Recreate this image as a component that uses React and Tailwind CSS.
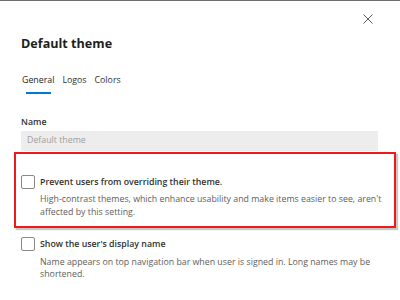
import React from "react";

function Checkbox() {
  return <div className="w-[14px] h-[14px] shrink-0 rounded-[2px] border border-[#8a8886] bg-white" />;
}

export default function App() {
  return (
    <div className="w-[400px] h-[300px] bg-white overflow-hidden border-t border-[#6e6e6e] font-['Open_Sans',sans-serif] text-[#323130] relative">
      <button className="absolute left-[363px] top-[13px] w-[10px] h-[10px] flex items-center justify-center">
        <svg width="10" height="10" viewBox="0 0 10 10">
          <path d="M0.5 0.5 L9.5 9.5 M9.5 0.5 L0.5 9.5" stroke="#5a5a5a" strokeWidth="1" />
        </svg>
      </button>
      <div className="pl-[21px] pt-[35px]">
        <h1 className="text-[12.6px] leading-[16px] font-bold text-[#201f1e]">Default theme</h1>
      </div>
      <div className="pl-[22px] pt-[22px] flex gap-[8px] text-[8.8px] leading-[12px]">
        <div className="flex flex-col items-center">
          <span className="text-[#201f1e]">General</span>
          <div className="mt-[6px] h-[2px] w-[25px] bg-[#0078d4]" />
        </div>
        <span className="text-[#323130]">Logos</span>
        <span className="text-[#323130]">Colors</span>
      </div>
      <div className="pl-[21px] pt-[22px] text-[8.8px] leading-[12px] font-semibold text-[#323130]">Name</div>
      <div className="ml-[21px] mt-[3px] w-[357px] h-[20px] bg-[#ededed] flex items-center pl-[6px] text-[8.8px] text-[#a19f9d]">
        Default theme
      </div>
      <div className="ml-[14px] mt-[1px] w-[382px] h-[76px] border-2 border-[#ee1a1a] shadow-[2px_2px_1px_rgba(0,0,0,0.22)] pl-[5px] pt-[21px]">
        <div className="flex items-center gap-[5px]">
          <Checkbox />
          <span className="text-[8.8px] leading-[14px] font-semibold text-[#323130]">Prevent users from overriding their theme.</span>
        </div>
        <p className="pl-[19px] pt-[4px] w-[370px] text-[8.8px] leading-[13px] text-[#5f5d5b]">
          High-contrast themes, which enhance usability and make items easier to see, aren't affected by this setting.
        </p>
      </div>
      <div className="pl-[21px] pt-[9px]">
        <div className="flex items-center gap-[5px]">
          <Checkbox />
          <span className="text-[8.8px] leading-[14px] font-semibold text-[#323130]">Show the user's display name</span>
        </div>
        <p className="pl-[19px] pt-[5px] w-[360px] text-[8.8px] leading-[12px] text-[#5f5d5b]">
          Name appears on top navigation bar when user is signed in. Long names may be shortened.
        </p>
      </div>
    </div>
  );
}
